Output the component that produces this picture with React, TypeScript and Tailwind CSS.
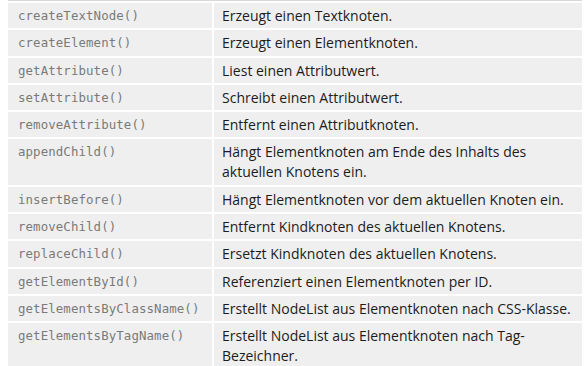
import React from 'react';

const rows: [string, string][] = [
  ['createTextNode()', 'Erzeugt einen Textknoten.'],
  ['createElement()', 'Erzeugt einen Elementknoten.'],
  ['getAttribute()', 'Liest einen Attributwert.'],
  ['setAttribute()', 'Schreibt einen Attributwert.'],
  ['removeAttribute()', 'Entfernt einen Attributknoten.'],
  ['appendChild()', 'Hängt Elementknoten am Ende des Inhalts des aktuellen Knotens ein.'],
  ['insertBefore()', 'Hängt Elementknoten vor dem aktuellen Knoten ein.'],
  ['removeChild()', 'Entfernt Kindknoten des aktuellen Knotens.'],
  ['replaceChild()', 'Ersetzt Kindknoten des aktuellen Knotens.'],
  ['getElementById()', 'Referenziert einen Elementknoten per ID.'],
  ['getElementsByClassName()', 'Erstellt NodeList aus Elementknoten nach CSS-Klasse.'],
  ['getElementsByTagName()', 'Erstellt NodeList aus Elementknoten nach Tag-Bezeichner.'],
];

export default function App() {
  return (
    <div className="w-[586px] h-[366px] overflow-hidden bg-white">
      {/* cut-off row above */}
      <div className="ml-[8px] mr-[4px] h-[1px] bg-[#d9d9d9]" />
      <div className="pl-[8px] pr-[4px] pt-[2px]">
        <div className="grid grid-cols-[204px_1fr] gap-[2px]">
          {rows.map(([method, desc]) => (
            <React.Fragment key={method}>
              <div className="bg-[#efefef] pl-[10px] pr-2 pt-[3px] pb-[2.3px] text-[12.4px] leading-[20px] tracking-[0.1px] text-[#7a7a7a] font-['DejaVu_Sans_Mono',monospace]">
                {method}
              </div>
              <div className="bg-[#efefef] pl-[8px] pr-2 pt-[3px] pb-[2.3px] text-[14px] leading-[20px] text-[#1c1c1c] font-['Open_Sans',sans-serif]">
                {desc}
              </div>
            </React.Fragment>
          ))}
        </div>
      </div>
    </div>
  );
}
